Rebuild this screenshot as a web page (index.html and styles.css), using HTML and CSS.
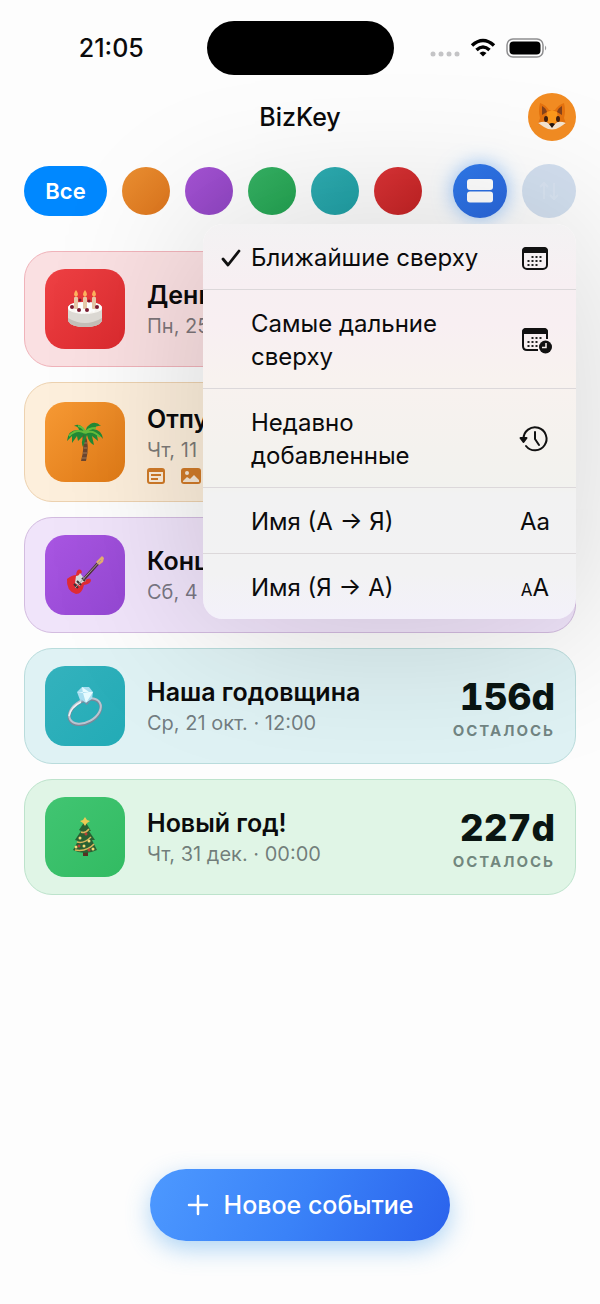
FILE: index.html
```html
<!DOCTYPE html>
<html lang="ru">
<head>
  <meta charset="UTF-8" />
  <meta name="viewport" content="width=device-width, initial-scale=1.0" />
  <title>BizKey</title>
  <link rel="stylesheet" href="styles.css">
</head>
<body>
  <div class="status-bar">
    <span class="time">21:05</span>
    <span class="island"></span>
    <span class="status-icons">
      <svg width="30" height="24" viewBox="0 0 30 24" fill="#c4c4c6"><circle cx="3" cy="18" r="2.500"/><circle cx="11" cy="18" r="2.500"/><circle cx="19" cy="18" r="2.500"/><circle cx="27" cy="18" r="2.500"/></svg>
      <svg width="26" height="24" viewBox="0 0 26 24" fill="none" stroke="#000" stroke-width="3.500"><path d="M2 9.500Q13-.5 24 9.500"/><path d="M6.500 14Q13 8 19.500 14"/><path d="M13 20.500L9.500 17Q13 14 16.500 17Z" fill="#000" stroke="none"/></svg>
      <svg width="42" height="24" viewBox="0 0 42 24"><rect x="1" y="3" width="36" height="18" rx="6" fill="none" stroke="#8e8e90" stroke-width="1.500"/><rect x="3.500" y="5.500" width="31" height="13" rx="4"/><path d="M39 9.500q2.500 2.500 0 5z" fill="#9a9a9c"/></svg>
    </span>
  </div>

  <header>
    <h1>BizKey</h1>
    <button class="avatar" aria-label="Профиль">
      <svg width="34" height="34" viewBox="0 0 34 34">
        <path d="M5 3Q11 5 14 10h6q3-5 9-7 2 8 0 15l2 6-6 2q-8 6-16 0l-6-2 2-6Q3 11 5 3z" fill="#e4720f"/>
        <path d="M7 6q4 2 5 6l-5 3zM27 6q-4 2-5 6l5 3z" fill="#86431c"/>
        <path d="M12 12l5-2 5 2 1 8-6 6-6-6z" fill="#fb981b"/>
        <path d="M3 23q8-3 11 1l3 2 3-2q3-4 11-1l-6 4q-8 5-16 0z" fill="#f4e4cf"/>
        <ellipse cx="11" cy="19" rx="2" ry="3" fill="#42200f"/><ellipse cx="23" cy="19" rx="2" ry="3" fill="#42200f"/>
        <path d="M14 24q3-2 6 0l-3 4z" fill="#24150f"/>
      </svg>
    </button>
  </header>

  <div class="toolbar">
    <div class="filters">
      <button class="all">Все</button>
      <button class="dot orange" aria-label="Оранжевый"></button>
      <button class="dot purple" aria-label="Фиолетовый"></button>
      <button class="dot green" aria-label="Зелёный"></button>
      <button class="dot teal" aria-label="Бирюзовый"></button>
      <button class="dot red" aria-label="Красный"></button>
    </div>
    <div class="views">
      <button class="view active" aria-label="Список">
        <svg width="26" height="24" viewBox="0 0 26 24" fill="#fff"><rect width="26" height="11" rx="3"/><rect y="12.500" width="26" height="11" rx="3"/></svg>
      </button>
      <button class="view sort" aria-label="Сортировка">
        <svg width="26" height="24" viewBox="0 0 26 24" fill="none" stroke="#fff" stroke-width="2"><path d="M8 20V4M4 8l4-4 4 4M18 4v16M14 16l4 4 4-4"/></svg>
      </button>
    </div>

    <div class="menu">
      <button class="menu-item">
        <svg class="check" width="20" height="20" viewBox="0 0 20 20" fill="none" stroke="#111" stroke-width="2.800" stroke-linecap="round" stroke-linejoin="round"><path d="M2 11l5 6L18 3"/></svg>
        <span class="label">Ближайшие сверху</span>
        <svg class="icon" width="34" height="30" viewBox="0 0 34 30"><rect x="5" y="5" width="24" height="21" rx="4" fill="none" stroke="#111" stroke-width="2"/><path d="M4 10V8q0-4 4-4h18q4 0 4 4v2z" fill="#111"/><path d="M13.500 14h12M9.500 18h16M9.500 22h12" stroke="#222" stroke-width="2" stroke-dasharray="2 2"/></svg>
      </button>
      <button class="menu-item">
        <span class="label">Самые дальние сверху</span>
        <svg class="icon" width="34" height="30" viewBox="0 0 34 30"><path d="M20 25H9q-4 0-4-4V8q0-4 4-4h16q4 0 4 4v6" fill="none" stroke="#111" stroke-width="2"/><path d="M4 9V7q0-4 4-4h18q4 0 4 4v2z" fill="#111"/><path d="M13.500 13h12M9.500 17h12M9.500 21h10" stroke="#222" stroke-width="2" stroke-dasharray="2 2"/><circle cx="27.500" cy="22" r="6.500" fill="#111"/><path d="M28 18v4.500h-4" fill="none" stroke="#f8f1ee" stroke-width="1.500"/></svg>
      </button>
      <button class="menu-item">
        <span class="label">Недавно добавленные</span>
        <svg class="icon" width="34" height="30" viewBox="0 0 34 30" fill="none" stroke="#111" stroke-width="2" stroke-linecap="round"><path d="M5.500 15A11.500 11.500 0 1 1 8 22"/><path d="M17 8v7l4 6"/><path d="M2.500 14h6l-3 4z" fill="#111" stroke-linejoin="round"/></svg>
      </button>
      <button class="menu-item">
        <span class="label">Имя (А → Я)</span>
        <span class="icon">Aa</span>
      </button>
      <button class="menu-item">
        <span class="label">Имя (Я → А)</span>
        <span class="icon"><small>A</small>A</span>
      </button>
    </div>
  </div>

  <main class="events">
    <article class="card card-red">
      <div class="tile red">
        <svg width="40" height="40" viewBox="0 0 40 40">
          <path d="M3 19v13q3 6 17 6t17-6V19z" fill="#dedbd6"/>
          <path d="M3 29q17 10 34 0v3q-3 6-17 6T3 32z" fill="#c5c0ba"/>
          <ellipse cx="20" cy="19" rx="17" ry="6" fill="#faf8f4"/>
          <path d="M3 19q2 5 4 1t4 4q2-4 5 1 4-4 8 0 3-5 5-1 2-8 4-4t4-1q0-6-17-6T3 19z" fill="#fff"/>
          <g fill="#e8c9a8"><rect x="9" y="8" width="4" height="12" rx="1"/><rect x="18" y="8" width="4" height="12" rx="1"/><rect x="27" y="8" width="4" height="12" rx="1"/></g>
          <path d="M11 1q4 5 0 7-4-2 0-7zM20 1q4 5 0 7-4-2 0-7zM29 1q4 5 0 7-4-2 0-7z" fill="#ffb35e"/>
          <g fill="#7d1a30"><circle cx="7" cy="18" r="2"/><circle cx="14" cy="21" r="2"/><circle cx="22" cy="21" r="2"/><circle cx="32" cy="18" r="2"/><circle cx="15" cy="11" r="1.500"/><circle cx="24" cy="12" r="1.500"/></g>
        </svg>
      </div>
      <div class="info">
        <h2>День рождения</h2>
        <p>Пн, 25 мая</p>
      </div>
    </article>

    <article class="card card-orange">
      <div class="tile orange">
        <svg width="40" height="40" viewBox="0 0 40 40">
          <path d="M20 12q5 11 1 27h-5q4-14 1-26z" fill="#6b4630"/>
          <path d="M17 36h5M18 31h4M19 26h3M19 21h3" stroke="#a67b55"/>
          <path d="M20 10Q16 0 9 4q4 0 5 4Q3 7 2 19l5-5 0 7 5-7 1 5 7-7q-5 7-2 13l4-12q2 8 7 10l-2-9 6 5-1-6q3 0 6 4-1-9-10-10 4-4 8-3-7-7-14 1z" fill="#228a35"/>
          <path d="M20 11Q12 6 4 14M20 11q8-4 15 4M20 11q-1-6-7-7M20 11q3-5 11-5" fill="none" stroke="#66bd3c" stroke-width="2"/>
        </svg>
      </div>
      <div class="info">
        <h2>Отпуск</h2>
        <p>Чт, 11 июня</p>
        <div class="badges">
          <svg width="18" height="16" viewBox="0 0 18 16"><rect x="1" y="1" width="16" height="14" rx="2" fill="none" stroke="#d17b28" stroke-width="2"/><path d="M1 3h16M4 7h10M4 11h7" stroke="#d17b28" stroke-width="2"/></svg>
          <svg width="20" height="16" viewBox="0 0 20 16"><rect width="20" height="16" rx="3" fill="#d17b28"/><circle cx="6" cy="5" r="2" fill="#f7e8d5"/><path d="M2 13l4-4 3 2 4-4 5 5v2H2z" fill="#f7e8d5"/></svg>
        </div>
      </div>
    </article>

    <article class="card card-purple">
      <div class="tile purple">
        <svg width="40" height="40" viewBox="0 0 40 40">
          <path d="M19 24L36 5" stroke="#4f3439" stroke-width="3"/>
          <path d="M33 5l4-4 2 2-1 4-4 3-3-3z" fill="#e6b070"/>
          <path d="M2 24q5-4 9-4 1-7 5-5 2 2-1 5l5 5q5-3 6 0 0 4-7 5-2 9-8 9Q1 36 2 24z" fill="#e02c35"/>
          <path d="M11 21q3 0 4-3l6 8q-5 1-6 5l-5-3z" fill="#d9dedc"/>
          <path d="M9 29l4 4M12 26l4 4M17 23l3 3" stroke="#37343a" stroke-width="2"/>
          <path d="M10 33L36 5" stroke="#a7999d"/>
        </svg>
      </div>
      <div class="info">
        <h2>Концерт</h2>
        <p>Сб, 4 июля</p>
      </div>
    </article>

    <article class="card card-teal">
      <div class="tile teal">
        <svg width="40" height="40" viewBox="0 0 40 40">
          <ellipse cx="20" cy="26" rx="17" ry="11" transform="rotate(-29 20 26)" fill="none" stroke="#7c8798" stroke-width="3"/>
          <ellipse cx="20" cy="25" rx="17" ry="11" transform="rotate(-29 20 25)" fill="none" stroke="#b9c5d1" stroke-width="2"/>
          <path d="M4 30q2-9 12-14" fill="none" stroke="#edf3f6" stroke-width="1.500"/>
          <path d="M12 6l5-5h7l4 5-1 7-6 4-6-3z" fill="#a8def0"/>
          <path d="M12 6l6 1 6-1 4 0-7 11-3-10-1-6 7 5" fill="#e6fbff"/>
          <path d="M15 13l6 4 6-4-5 6z" fill="#788da3"/>
        </svg>
      </div>
      <div class="info">
        <h2>Наша годовщина</h2>
        <p>Ср, 21 окт. · 12:00</p>
      </div>
      <div class="countdown">
        <strong>156d</strong>
        <span>ОСТАЛОСЬ</span>
      </div>
    </article>

    <article class="card card-green">
      <div class="tile green">
        <svg width="40" height="40" viewBox="0 0 40 40">
          <path d="M18 34h5v5h-5z" fill="#583123"/>
          <path d="M20 4l6 10-2 0 6 9-3 0 5 10q-12 6-24 0l5-9-3-1 6-9-2-1z" fill="#296133"/>
          <path d="M16 15q4 2 8-3M12 25q7 2 14-5M10 33q12 2 19-6" fill="none" stroke="#d7b55b" stroke-width="1.500"/>
          <path d="M20 0l2 3 3 1-3 2-2 3-2-3-3-2 3-1z" fill="#edcb54"/>
          <g fill="#f4da74"><circle cx="15" cy="21" r="1.500"/><circle cx="24" cy="24" r="1.500"/><circle cx="19" cy="29" r="1.500"/><circle cx="28" cy="32" r="1.500"/><circle cx="11" cy="30" r="1.500"/></g>
          <g fill="#b54137"><circle cx="21" cy="17" r="1.500"/><circle cx="14" cy="29" r="1.500"/><circle cx="24" cy="33" r="1.500"/></g>
        </svg>
      </div>
      <div class="info">
        <h2>Новый год!</h2>
        <p>Чт, 31 дек. · 00:00</p>
      </div>
      <div class="countdown">
        <strong>227d</strong>
        <span>ОСТАЛОСЬ</span>
      </div>
    </article>
  </main>

  <button class="add">
    <svg width="22" height="22" viewBox="0 0 22 22" stroke="#fff" stroke-width="2.500" stroke-linecap="round"><path d="M11 2v18M2 11h18"/></svg>
    Новое событие
  </button>
</body>
</html>
```
FILE: styles.css
```css
* {
  box-sizing: border-box;
}
body {
  margin: 0;
  padding: 21px 24px 63px;
  min-height: 100vh;
  display: flex;
  flex-direction: column;
  overflow-x: hidden;
  font-family: Inter, "Noto Sans", sans-serif;
  background: #fdfdfd;
  color: #0b0b0c;
}
button {
  border: none;
  padding: 0;
  font: inherit;
  color: inherit;
  cursor: pointer;
}
h1,
h2,
p {
  margin: 0;
}
.status-bar {
  display: grid;
  grid-template-columns: 1fr 187px 1fr;
  align-items: center;
  height: 54px;
}
.time {
  padding-right: 8px;
  text-align: center;
  font-size: 25px;
  font-weight: 500;
}
.island {
  height: 54px;
  border-radius: 27px;
  background: #000;
}
.status-icons {
  display: flex;
  justify-content: center;
  gap: 10px;
  padding-left: 8px;
}
header {
  display: grid;
  grid-template-columns: 48px 1fr 48px;
  align-items: center;
  margin-top: 18px;
}
h1 {
  grid-column: 2;
  text-align: center;
  font-size: 25px;
  font-weight: 500;
}
.avatar {
  display: flex;
  align-items: center;
  justify-content: center;
  height: 48px;
  border-radius: 50%;
  background: #f28c23;
}
.toolbar {
  position: relative;
  display: flex;
  align-items: center;
  justify-content: space-between;
  margin-top: 23px;
}
.filters,
.views {
  display: flex;
  align-items: center;
  gap: 15px;
}
.all {
  width: 83px;
  height: 50px;
  border-radius: 25px;
  background: #0088ff;
  color: #fff;
  font-size: 22px;
  font-weight: 600;
}
.dot {
  width: 48px;
  height: 48px;
  border-radius: 50%;
}
.orange {
  background: linear-gradient(135deg, #f79a35, #e07a16);
}
.purple {
  background: linear-gradient(135deg, #a956e2, #9447d3);
}
.green {
  background: linear-gradient(135deg, #41c572, #32bb62);
}
.teal {
  background: linear-gradient(135deg, #34b2bd, #22abb6);
}
.red {
  background: linear-gradient(135deg, #ee4144, #dc2a2e);
}
.dot.orange {
  background: linear-gradient(135deg, #ea9032, #db731c);
}
.dot.purple {
  background: linear-gradient(135deg, #a653d5, #8f45c2);
}
.dot.green {
  background: linear-gradient(135deg, #36b264, #23a351);
}
.dot.teal {
  background: linear-gradient(135deg, #2fadb2, #20a0a5);
}
.dot.red {
  background: linear-gradient(135deg, #dc3437, #c42324);
}
.view {
  display: flex;
  align-items: center;
  justify-content: center;
  width: 54px;
  height: 54px;
  border-radius: 50%;
}
.view.active {
  background: linear-gradient(135deg, #2f7aec, #2a66dc);
  box-shadow: 0 0 20px rgba(80, 160, 250, 0.6);
}
.sort {
  background: #d2dfef;
}
.sort svg {
  opacity: 0.15;
}
.menu {
  position: absolute;
  top: 100%;
  right: 0;
  z-index: 2;
  width: 373px;
  max-width: 100%;
  margin-top: 6px;
  overflow: hidden;
  border-radius: 20px;
  background: linear-gradient(#f3f2f3, #f7eff2 60px, #f8eff2 100px, #f8f2ef 155px, #f4f2ee 225px, #f2f2ee 262px, #f2f2f2 270px, #f2f2f3 350px, #f3f1fa);
  box-shadow: 0 4px 160px rgba(0, 0, 0, 0.18);
}
.menu-item {
  display: flex;
  align-items: center;
  width: 100%;
  padding: 17px 24px 15px 18px;
  background: none;
  text-align: left;
  font-size: 24px;
  line-height: 33px;
}
.menu-item + .menu-item {
  border-top: 1px solid #dcd8da;
}
.label {
  flex: 1;
  max-width: 240px;
  margin-left: 30px;
}
.check {
  flex: none;
}
.check + .label {
  margin-left: 10px;
}
.icon {
  flex: none;
  width: 34px;
  margin-left: auto;
  text-align: center;
}
.icon small {
  font-size: 17px;
  line-height: 1;
}
.events {
  display: flex;
  flex-direction: column;
  gap: 15px;
  margin-top: 33px;
}
.card {
  display: flex;
  align-items: center;
  gap: 22px;
  padding: 17px 20px;
  border: 1px solid;
  border-radius: 28px;
}
.card-red {
  background: #fae0e2;
  border-color: #f0b3ba;
}
.card-orange {
  background: #fdefdc;
  border-color: #edd2b0;
}
.card-purple {
  background: #f0e4fa;
  border-color: #d3bce0;
}
.card-teal {
  background: #dff2f4;
  border-color: #b9dcdc;
}
.card-green {
  background: #e0f5e6;
  border-color: #bde3cc;
}
.tile {
  display: flex;
  align-items: center;
  justify-content: center;
  flex: none;
  width: 80px;
  height: 80px;
  border-radius: 20px;
}
.info {
  flex: 1;
  padding-top: 4px;
}
.info h2 {
  font-size: 25px;
  line-height: 30px;
  font-weight: 600;
}
.info p {
  font-size: 20px;
  line-height: 32px;
  color: rgba(40, 45, 50, 0.6);
}
.badges {
  display: flex;
  gap: 16px;
  margin-top: 2px;
}
.countdown {
  display: flex;
  flex-direction: column;
  align-items: flex-end;
  padding-top: 12px;
}
.countdown strong {
  font-size: 37px;
  line-height: 38px;
  font-weight: 800;
  font-variant-numeric: tabular-nums;
  color: #0a1512;
}
.countdown span {
  font-size: 15px;
  line-height: 30px;
  font-weight: 700;
  letter-spacing: 2px;
  color: rgba(40, 60, 55, 0.6);
}
.add {
  display: flex;
  align-items: center;
  justify-content: center;
  gap: 15px;
  align-self: center;
  height: 72px;
  margin-top: auto;
  padding: 0 37px;
  border-radius: 36px;
  background: linear-gradient(115deg, #4d99ff, #3a82f8 50%, #2a62ec);
  box-shadow: 0 8px 24px rgba(80, 165, 235, 0.45);
  color: #fff;
  font-size: 25px;
  font-weight: 500;
}
```
